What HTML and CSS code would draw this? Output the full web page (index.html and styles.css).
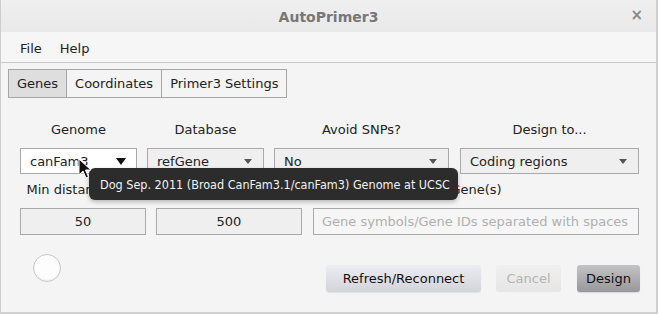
FILE: index.html
```html
<!DOCTYPE html>
<html>
<head>
<meta charset="utf-8">
<link rel="stylesheet" href="styles.css">
</head>
<body>
<div class="window">
  <div class="titlebar">
    <span class="title">AutoPrimer3</span>
    <span class="close">×</span>
  </div>
  <div class="menubar">
    <span class="menu">File</span>
    <span class="menu">Help</span>
  </div>
  <div class="main">
    <div class="tabs">
      <div class="tab selected">Genes</div>
      <div class="tab">Coordinates</div>
      <div class="tab">Primer3 Settings</div>
    </div>
    <div class="grid4 labels1">
      <div class="lbl">Genome</div>
      <div class="lbl">Database</div>
      <div class="lbl">Avoid SNPs?</div>
      <div class="lbl">Design to...</div>
    </div>
    <div class="grid4">
      <div class="combo white"><span>canFam3</span><span class="arrow big"></span></div>
      <div class="combo"><span>refGene</span><span class="arrow"></span></div>
      <div class="combo"><span>No</span><span class="arrow"></span></div>
      <div class="combo"><span>Coding regions</span><span class="arrow"></span></div>
    </div>
    <div class="grid3 labels2">
      <div class="lbl">Min distance (bp)</div>
      <div class="lbl">Flanking region (bp)</div>
      <div class="lbl">Gene(s)</div>
    </div>
    <div class="grid3">
      <div class="field center">50</div>
      <div class="field center">500</div>
      <div class="field placeholder">Gene symbols/Gene IDs separated with spaces</div>
    </div>
    <div class="bottom">
      <div class="spinner"></div>
      <div class="buttons">
        <div class="btn refresh">Refresh/Reconnect</div>
        <div class="btn cancel">Cancel</div>
        <div class="btn design">Design</div>
      </div>
    </div>
  </div>
  <div class="tooltip">Dog Sep. 2011 (Broad CanFam3.1/canFam3) Genome at UCSC</div>
  <svg class="cursor" width="14" height="22" viewBox="0 0 14 22">
    <path d="M1 1 L1 17 L5 13 L8 20 L10.5 19 L7.5 12 L13 12 Z" fill="#111" stroke="#fff" stroke-width="1" stroke-linejoin="round"/>
  </svg>
</div>
</body>
</html>
```
FILE: styles.css
```css
* { box-sizing: border-box; }
html, body { margin: 0; padding: 0; }
body {
  width: 658px;
  height: 314px;
  overflow: hidden;
  background: #f4f4f4;
  font-family: "DejaVu Sans", sans-serif;
  font-size: 13px;
  color: #222;
}
.window {
  position: relative;
  width: 658px;
  height: 314px;
  border-left: 1px solid #cdcdcd;
  border-right: 2px solid #cfcfcf;
  border-bottom: 2px solid #d0d0d0;
  background: #f4f4f4;
}
.titlebar {
  height: 32px;
  background: linear-gradient(#efefef, #e9e9e9);
  display: flex;
  align-items: center;
  justify-content: center;
  position: relative;
}
.title {
  font-weight: bold;
  color: #777;
  font-size: 14px;
  margin-top: 1px;
}
.close {
  position: absolute;
  right: 13px;
  top: 6px;
  font-weight: bold;
  font-size: 15px;
  color: #888;
}
.menubar {
  height: 31px;
  background: #f6f6f6;
  border-bottom: 1px solid #c9c9c9;
  display: flex;
  align-items: center;
  padding: 3px 0 0 19px;
  gap: 18px;
}
.menu { color: #222; }
.main {
  padding: 6px 17px 0 19px;
}
.tabs {
  display: flex;
  margin-left: -12px;
  height: 29px;
}
.tab {
  border: 1px solid #a6a6a6;
  border-left: none;
  padding: 0 8px;
  display: flex;
  align-items: center;
  background: #f4f4f4;
  color: #222;
}
.tab:first-child { border-left: 1px solid #a6a6a6; }
.tab.selected { background: #dedede; }
.grid4 {
  display: grid;
  grid-template-columns: 117px 117px 175px 1fr;
  column-gap: 10px;
}
.grid4 > :nth-child(4) { margin-left: 1px; }
.grid3 {
  display: grid;
  grid-template-columns: 126px 146px 1fr;
  column-gap: 10px;
}
.grid3 > :nth-child(3) { margin-left: 1px; }
.lbl {
  text-align: center;
  line-height: 16px;
  white-space: nowrap;
}
.labels1 { margin-top: 24px; margin-bottom: 10px; }
.labels2 { margin-top: 8px; margin-bottom: 10px; }
.combo {
  height: 26px;
  border: 1px solid #a9a9a9;
  background: #efefef;
  display: flex;
  align-items: center;
  justify-content: space-between;
  padding: 0 11px 0 9px;
}
.combo.white { background: #fff; }
.arrow {
  width: 0; height: 0;
  border-left: 4px solid transparent;
  border-right: 4px solid transparent;
  border-top: 5px solid #555;
}
.arrow.big {
  border-left-width: 5px;
  border-right-width: 5px;
  border-top: 7px solid #111;
  margin-right: -1px;
}
.field {
  height: 27px;
  border: 1px solid #a9a9a9;
  background: #efefef;
  display: flex;
  align-items: center;
  white-space: nowrap;
  overflow: hidden;
}
.field.center { justify-content: center; }
.field.placeholder {
  background: #f6f6f6;
  color: #b0b0b0;
  padding-left: 8px;
}
.bottom {
  display: flex;
  justify-content: space-between;
  margin-top: 19px;
}
.spinner {
  width: 28px;
  height: 28px;
  border-radius: 50%;
  background: #fdfdfd;
  border: 1px solid #c8c8c8;
  box-shadow: inset 0 -1px 2px rgba(0,0,0,0.08);
  margin-left: 13px;
}
.buttons {
  display: flex;
  margin-top: 11px;
  margin-right: -1px;
}
.btn {
  height: 27px;
  display: flex;
  align-items: center;
  justify-content: center;
  border-radius: 3px;
}
.refresh {
  width: 155px;
  background: linear-gradient(#ecedf2, #d3d4da);
  color: #111;
  box-shadow: 0 1px 1px rgba(0,0,0,0.08);
}
.cancel {
  width: 65px;
  margin-left: 15px;
  background: linear-gradient(#efefef, #e6e6e6);
  color: #b4b4b4;
}
.design {
  width: 63px;
  margin-left: 16px;
  background: linear-gradient(#c3c3c6, #98989c);
  color: #111;
  box-shadow: 0 1px 1px rgba(0,0,0,0.12);
}
.tooltip {
  position: absolute;
  left: 88px;
  top: 168px;
  width: 369px;
  height: 32px;
  background: #2c2c2c;
  color: #f2f2f2;
  font-family: "DejaVu Sans Condensed", "DejaVu Sans", sans-serif;
  font-size: 12.5px;
  border-radius: 6px;
  padding-left: 11px;
  display: flex;
  align-items: center;
  white-space: nowrap;
  box-shadow: 0 2px 4px rgba(0,0,0,0.25);
}
.cursor {
  position: absolute;
  left: 77px;
  top: 158px;
}
```
